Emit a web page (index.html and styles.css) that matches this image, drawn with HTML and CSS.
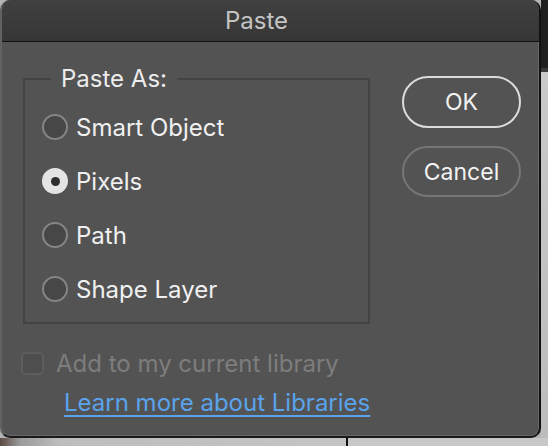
FILE: index.html
```html
<!DOCTYPE html>
<html>
<head>
<meta charset="utf-8">
<link rel="stylesheet" href="styles.css">
</head>
<body>
<div class="screen">
  <div class="top-row">
    <div class="dialog">
      <div class="titlebar"><span class="title">Paste</span></div>
      <div class="content">
        <div class="main-row">
          <fieldset class="group">
            <legend class="legend">Paste As:</legend>
            <label class="radio-row"><span class="radio"></span><span class="label">Smart Object</span></label>
            <label class="radio-row"><span class="radio checked"></span><span class="label">Pixels</span></label>
            <label class="radio-row"><span class="radio"></span><span class="label">Path</span></label>
            <label class="radio-row"><span class="radio"></span><span class="label">Shape Layer</span></label>
          </fieldset>
          <div class="buttons">
            <div class="btn btn-ok">OK</div>
            <div class="btn btn-cancel">Cancel</div>
          </div>
        </div>
        <div class="check-row"><span class="checkbox"></span><span class="check-label">Add to my current library</span></div>
        <a class="link" href="#">Learn more about Libraries</a>
      </div>
    </div>
    <div class="side"><div class="side-top"></div><div class="side-line"></div><div class="side-bottom"></div></div>
  </div>
  <div class="bottom"><div class="bottom-left"></div><div class="bottom-line"></div><div class="bottom-right"></div></div>
</div>
</body>
</html>
```
FILE: styles.css
```css
* { box-sizing: border-box; }
html, body { margin: 0; padding: 0; }
body {
  width: 548px;
  height: 446px;
  overflow: hidden;
  background: #b4b4b4;
  font-family: Inter, "Liberation Sans", Arial, sans-serif;
}
.screen { display: flex; flex-direction: column; width: 548px; height: 446px; }
.top-row { display: flex; height: 438px; }
.dialog {
  width: 541px;
  height: 438px;
  background: #535353;
  border-radius: 10px 10px 10px 10px;
  border-left: 2px solid #626262;
  border-right: 2px solid #111;
  border-bottom: 2px solid #1a1a1a;
  box-shadow: inset -1px 0 0 #6a6a6a, inset 0 -1px 0 #666;
  overflow: hidden;
  display: flex;
  flex-direction: column;
}
.titlebar {
  height: 42px;
  background: linear-gradient(#404040, #363636);
  border-bottom: 1px solid #111;
  display: flex;
  align-items: center;
  justify-content: center;
  padding-right: 28px;
}
.title { color: #c4c4c4; font-size: 24px; }
.content { padding: 23px 0 0 21px; display: flex; flex-direction: column; }
.main-row { display: flex; align-items: flex-start; }
.group {
  margin: 0;
  width: 347px;
  height: 259px;
  border: 2px solid #434343;
  padding: 7px 0 0 17px;
  display: flex;
  flex-direction: column;
}
.legend {
  margin-left: 9px;
  padding: 0 10px;
  color: #ececec;
  font-size: 24px;
  line-height: 28px;
}
.radio-row { display: flex; align-items: center; height: 54px; gap: 8px; }
.radio {
  width: 26px; height: 26px;
  border-radius: 50%;
  border: 2px solid #858585;
  background: #474747;
  display: flex; align-items: center; justify-content: center;
}
.radio.checked { background: #e4e4e4; border-color: #e4e4e4; }
.radio.checked::after { content: ""; width: 9px; height: 9px; border-radius: 50%; background: #2e2e2e; }
.label { color: #f0f0f0; font-size: 24px; }
.buttons { margin-left: 32px; margin-top: 11px; display: flex; flex-direction: column; gap: 18px; }
.btn {
  width: 119px; height: 52px;
  border-radius: 26px;
  display: flex; align-items: center; justify-content: center;
  color: #f2f2f2;
  font-size: 23px;
}
.btn-ok { border: 2px solid #dcdcdc; }
.btn-cancel { border: 2px solid #767676; height: 51px; }
.check-row { display: flex; align-items: center; margin-top: 27px; margin-left: -2px; gap: 12px; height: 24px; }
.checkbox {
  width: 23px; height: 23px;
  border-radius: 5px;
  border: 2px solid #5d5d5d;
  background: #4e4e4e;
}
.check-label { color: #7d7d7d; font-size: 24px; }
.link {
  margin-top: 13px;
  margin-left: 41px;
  color: #5aa3ec;
  font-size: 24px;
  text-decoration: underline;
  text-underline-offset: 4px;
  text-decoration-thickness: 2px;
  align-self: flex-start;
}
.side { width: 7px; display: flex; flex-direction: column; }
.side-top { height: 68px; background: #1e1e1e; }
.side-line { height: 4px; background: #3a3a3a; }
.side-bottom { flex: 1; background: linear-gradient(#c9c9c9, #bcbcbc); }
.bottom { flex: 1; display: flex; }
.bottom-left { width: 346px; background: linear-gradient(90deg, #5b4a44 0, #9a9a9a 20px, #bdbdbd 60px, #c4c4c4); }
.bottom-line { width: 2px; background: #111; }
.bottom-right { flex: 1; background: #c8c8c8; }
```
